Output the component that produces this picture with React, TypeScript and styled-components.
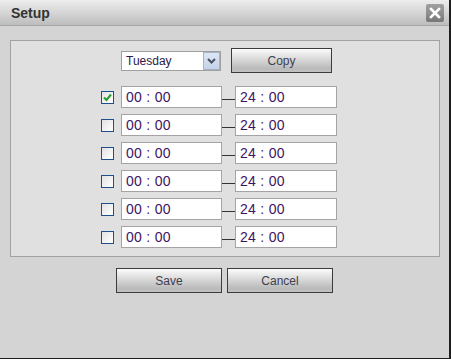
import React from "react"
import styled, { createGlobalStyle } from "styled-components"

const GlobalStyle = createGlobalStyle`
  html, body {
    margin: 0;
    padding: 0;
    background: #d4d4d4;
  }
  body {
    font-family: "Liberation Sans", Arial, sans-serif;
  }
`

const rows = [true, false, false, false, false, false]

export default function App() {
  return (
    <Window>
      <GlobalStyle />
      <TitleBar>
        <Title>Setup</Title>
        <CloseButton aria-label="close">
          <svg width="12" height="12" viewBox="0 0 12 12">
            <path d="M2 2 L10 10 M10 2 L2 10" stroke="#fff" strokeWidth="2.6" strokeLinecap="square" />
          </svg>
        </CloseButton>
      </TitleBar>
      <Body>
        <Panel>
          <TopRow>
            <Select>
              <span>Tuesday</span>
              <SelectArrow>
                <svg width="9" height="6" viewBox="0 0 9 6">
                  <path d="M1 1 L4.5 4.5 L8 1" stroke="#4a5060" strokeWidth="2" fill="none" />
                </svg>
              </SelectArrow>
            </Select>
            <Button $width={101}>Copy</Button>
          </TopRow>
          {rows.map((checked, i) => (
            <TimeRow key={i}>
              <Check $checked={checked}>
                {checked && (
                  <svg width="11" height="11" viewBox="0 0 11 11">
                    <path d="M2 5.5 L4.5 8 L9 2.5" stroke="#2d9a2d" strokeWidth="2" fill="none" />
                  </svg>
                )}
              </Check>
              <TimeBox $width={101}>00 : 00</TimeBox>
              <Dash />
              <TimeBox $width={102}>24 : 00</TimeBox>
            </TimeRow>
          ))}
        </Panel>
        <Footer>
          <Button $width={106}>Save</Button>
          <Button $width={106}>Cancel</Button>
        </Footer>
      </Body>
    </Window>
  )
}

const Window = styled.div`
  width: 449px;
  height: 358px;
  border-right: 2px solid #1e1e1e;
  border-bottom: 1px solid #1e1e1e;
  display: flex;
  flex-direction: column;
  background: #d4d4d4;
`

const TitleBar = styled.div`
  height: 25px;
  border-bottom: 1px solid #a6a6a6;
  background: linear-gradient(#ededed, #d6d6d6 50%, #bdbdbd);
  display: flex;
  align-items: center;
  justify-content: space-between;
  padding: 0 5px 0 11px;
`

const Title = styled.span`
  font-size: 14px;
  font-weight: bold;
  color: #333;
  margin-top: 1px;
`

const CloseButton = styled.div`
  width: 18px;
  height: 18px;
  border-radius: 2px;
  background: linear-gradient(#a0a0a0, #8a8a8a 60%, #777);
  display: flex;
  align-items: center;
  justify-content: center;
`

const Body = styled.div`
  flex: 1;
  display: flex;
  flex-direction: column;
`

const Panel = styled.div`
  margin: 14px 9px 0 10px;
  height: 217px;
  box-sizing: border-box;
  border: 1px solid #a2a2a2;
  background: #e0e0e0;
  padding: 7px 0 0 90px;
  display: flex;
  flex-direction: column;
  gap: 6px;
`

const TopRow = styled.div`
  display: flex;
  align-items: center;
  gap: 10px;
  margin-left: 20px;
  margin-bottom: 7px;
`

const Select = styled.div`
  width: 100px;
  height: 20px;
  box-sizing: border-box;
  border: 1px solid #a0a0a0;
  background: #fff;
  display: flex;
  align-items: center;
  justify-content: space-between;
  padding-left: 4px;
  font-size: 12px;
  color: #2a1a4a;
`

const SelectArrow = styled.div`
  width: 17px;
  height: 18px;
  box-sizing: border-box;
  border: 1px solid #a4b4c8;
  background: linear-gradient(#dde7f4, #c3d3e8);
  display: flex;
  align-items: center;
  justify-content: center;
`

const Button = styled.div<{ $width: number }>`
  width: ${(p) => p.$width}px;
  height: 25px;
  box-sizing: border-box;
  border: 1px solid #3c3c3c;
  background: linear-gradient(#fbfbfb, #e4e4e4 30%, #bababa 85%, #c2c2c2);
  display: flex;
  align-items: center;
  justify-content: center;
  font-size: 12px;
  color: #404050;
`

const TimeRow = styled.div`
  display: flex;
  align-items: center;
  height: 22px;
`

const Check = styled.div<{ $checked: boolean }>`
  width: 11px;
  height: 11px;
  border: 1px solid #1c5088;
  background: linear-gradient(135deg, #e2e2e2, #ffffff);
  margin-right: 7px;
  display: flex;
  align-items: center;
  justify-content: center;
`

const TimeBox = styled.div<{ $width: number }>`
  width: ${(p) => p.$width}px;
  height: 22px;
  box-sizing: border-box;
  border: 1px solid #a4a4a4;
  background: #fff;
  padding-left: 4px;
  display: flex;
  align-items: center;
  font-size: 14px;
  letter-spacing: 0.3px;
  color: #3c1464;
  white-space: pre;
`

const Dash = styled.div`
  width: 13px;
  height: 1px;
  background: #333;
  margin-top: 4px;
`

const Footer = styled.div`
  display: flex;
  justify-content: center;
  gap: 5px;
  margin-top: 11px;
`
